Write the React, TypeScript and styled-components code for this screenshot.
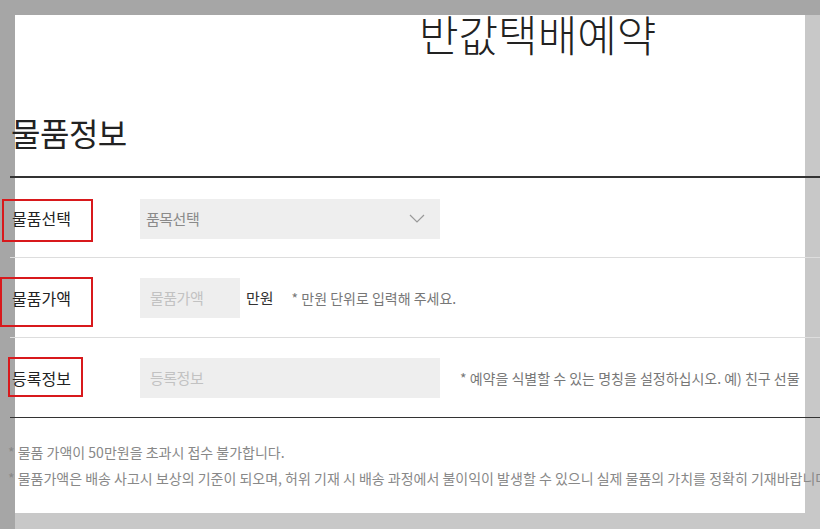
import React from "react";
import styled, { createGlobalStyle } from "styled-components";

const GlobalStyle = createGlobalStyle`
  html, body {
    margin: 0;
    padding: 0;
    overflow: hidden;
  }
  body {
    font-family: "Noto Sans CJK KR", "Noto Sans", sans-serif;
    color: #222;
  }
`;

const Frame = styled.div`
  width: 820px;
  height: 529px;
  box-sizing: border-box;
  padding: 15px 15px 16px 15px;
  overflow: hidden;
  background:
    linear-gradient(#a6a6a6, #a6a6a6) top left / 100% 15px no-repeat,
    linear-gradient(#a6a6a6, #a6a6a6) top left / 15px 100% no-repeat,
    #c8c8c8;
`;

const Panel = styled.div`
  display: flow-root;
  height: 100%;
  background: #fff;
`;

const Content = styled.div`
  margin: 0 -15px 0 -5px;
`;

const Title = styled.h1`
  margin: 0;
  padding-left: 409px;
  font-size: 43px;
  line-height: 36px;
  font-weight: 300;
  color: #222;
  letter-spacing: 0;
`;

const SectionTitle = styled.h2`
  margin: 61px 0 0;
  padding-left: 1px;
  font-size: 32px;
  line-height: 40px;
  font-weight: 400;
  color: #222;
  letter-spacing: -0.5px;
`;

const Table = styled.div`
  margin-top: 24px;
  border-top: 2px solid #333;
  border-bottom: 1px solid #333;
`;

const Row = styled.div`
  position: relative;
  display: grid;
  grid-template-columns: 130px 1fr;
  align-items: center;
  height: 79px;
  border-bottom: 1px solid #ddd;

  &:last-child {
    border-bottom: none;
  }
`;

const Label = styled.div`
  padding-left: 2px;
  font-size: 16px;
  color: #222;
  letter-spacing: 0;
`;

const Marker = styled.div<{ $top: number; $left: number; $w: number; $h: number }>`
  position: absolute;
  top: ${(p) => p.$top}px;
  left: ${(p) => p.$left}px;
  width: ${(p) => p.$w}px;
  height: ${(p) => p.$h}px;
  box-sizing: border-box;
  border: 2px solid #d8191c;
  pointer-events: none;
`;

const Field = styled.div`
  display: flex;
  align-items: center;
`;

const Select = styled.div`
  display: flex;
  align-items: center;
  justify-content: space-between;
  box-sizing: border-box;
  width: 300px;
  height: 40px;
  margin-top: 2px;
  padding: 0 15px 0 6px;
  background: #eee;
  font-size: 15px;
  color: #8a8a8a;
  letter-spacing: -0.5px;
`;

const Input = styled.input<{ $w: number }>`
  box-sizing: border-box;
  width: ${(p) => p.$w}px;
  height: 40px;
  padding: 0 10px;
  border: none;
  outline: none;
  background: #eee;
  font-family: inherit;
  font-size: 15px;
  color: #333;
  letter-spacing: -0.5px;

  &::placeholder {
    color: #c2c2c2;
  }
`;

const Unit = styled.span`
  margin-left: 6px;
  font-size: 15px;
  color: #333;
`;

const Hint = styled.span<{ $gap: number }>`
  margin-left: ${(p) => p.$gap}px;
  font-size: 14px;
  color: #777;
  letter-spacing: 0;
  white-space: nowrap;
`;

const Notes = styled.ul`
  list-style: none;
  margin: 0;
  padding: 21px 0 0 0;
`;

const Note = styled.li`
  margin-left: -2px;
  font-size: 14px;
  line-height: 26px;
  color: #888;
  letter-spacing: 0;
  white-space: nowrap;
`;

const Chevron = () => (
  <svg width="16" height="9" viewBox="0 0 16 9" fill="none">
    <polyline points="1,1 8,8 15,1" stroke="#999" strokeWidth="1.2" />
  </svg>
);

export default function App() {
  return (
    <>
      <GlobalStyle />
      <Frame>
        <Panel>
          <Content>
            <Title>반값택배예약</Title>
            <SectionTitle>물품정보</SectionTitle>
            <Table>
              <Row>
                <Label>물품선택</Label>
                <Field>
                  <Select>
                    <span>품목선택</span>
                    <Chevron />
                  </Select>
                </Field>
                <Marker $top={21} $left={-8} $w={91} $h={43} />
              </Row>
              <Row>
                <Label>물품가액</Label>
                <Field>
                  <Input $w={100} placeholder="물품가액" />
                  <Unit>만원</Unit>
                  <Hint $gap={18}>* 만원 단위로 입력해 주세요.</Hint>
                </Field>
                <Marker $top={19} $left={-10} $w={93} $h={50} />
              </Row>
              <Row>
                <Label>등록정보</Label>
                <Field>
                  <Input $w={300} placeholder="등록정보" />
                  <Hint $gap={20}>* 예약을 식별할 수 있는 명칭을 설정하십시오. 예) 친구 선물</Hint>
                </Field>
                <Marker $top={19} $left={-2} $w={75} $h={40} />
              </Row>
            </Table>
            <Notes>
              <Note>* 물품 가액이 50만원을 초과시 접수 불가합니다.</Note>
              <Note>
                * 물품가액은 배송 사고시 보상의 기준이 되오며, 허위 기재 시 배송 과정에서 불이익이 발생할 수
                있으니 실제 물품의 가치를 정확히 기재바랍니다.
              </Note>
            </Notes>
          </Content>
        </Panel>
      </Frame>
    </>
  );
}
